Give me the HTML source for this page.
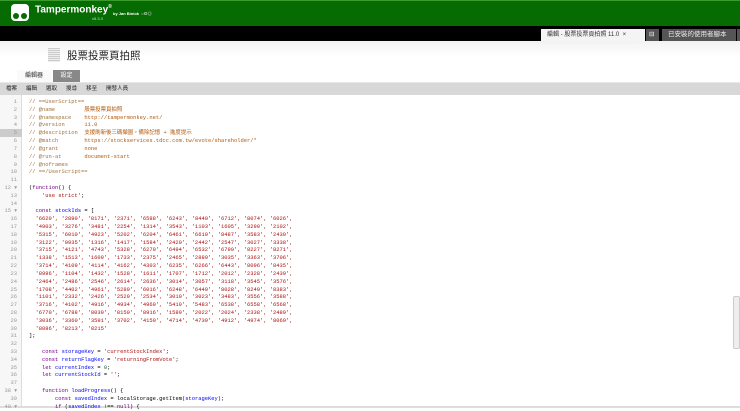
<!DOCTYPE html>
<html><head><meta charset="utf-8"><style>
*{margin:0;padding:0;box-sizing:border-box}
body{width:740px;height:408px;overflow:hidden;background:#fff;font-family:"Liberation Sans","Noto Sans CJK TC",sans-serif;position:relative}
.a{position:absolute}
#hdr{left:0;top:0;width:740px;height:26px;background:#066b02;border-top:1px solid #3a9a2a}
#blk{left:0;top:26px;width:740px;height:15px;background:#000}
#logo{left:11px;top:4px;width:18px;height:17px;background:#fff;border-radius:4px}
#logo i{position:absolute;bottom:2px;width:6px;height:6px;border-radius:50%;background:#066b02}
.tab{top:29px;height:12px;font-size:6.5px;line-height:12px;padding:0 6px}
#whitebar{left:0;top:41px;width:740px;height:41px;background:linear-gradient(#f2f2f2,#fff 40%)}
#menu{left:0;top:82px;width:740px;height:13px;background:#d8d8d8;border-top:1px solid #e8e8e8;font-size:5.5px;line-height:12px;color:#222}
#menu span{margin-left:7px;margin-right:2px}
#gut{left:0;top:95px;width:22px;height:313px;background:#f7f7f7;border-right:1px solid #ddd}
pre{font-family:"Liberation Mono","Noto Sans CJK TC",monospace;font-size:5.43px;line-height:7.82px;position:absolute;top:98px}
#nums{left:0;width:17px;text-align:right;color:#999}
#code{left:29px;color:#000}
.c{color:#a0733c}.v{color:#b05a10}.s{color:#a11}.k{color:#708}.d{color:#00f}.n{color:#164}
</style></head><body>
<div class="a" id="hdr"></div>
<div class="a" id="logo"><i style="left:2px"></i><i style="right:2px"></i></div>
<div class="a" style="left:35px;top:4px;color:#fff;font-size:10px;font-weight:bold">Tampermonkey<sup style="font-size:5px">®</sup></div>
<div class="a" style="left:113px;top:11px;color:#fff;font-size:4px;font-weight:bold">by Jan Biniok &nbsp;○⊙◎</div>
<div class="a" style="left:92px;top:16px;color:#cde;font-size:4px">v5.3.3</div>
<div class="a" id="blk"></div>
<div class="a tab" style="left:541px;width:104px;background:#f4f4f4;color:#333;font-size:6px">編輯 - 股票投票頁拍照 11.0 &nbsp;×</div>
<div class="a tab" style="left:646px;width:13px;background:#555;color:#fff;padding:0 3px">⊟</div>
<div class="a tab" style="left:662px;width:74px;background:#555;color:#eee">已安裝的使用者腳本</div>
<div class="a tab" style="left:737px;width:3px;background:#555"></div>
<div class="a" id="whitebar"></div>
<div class="a" style="left:48px;top:48px;width:12px;height:14px;background:repeating-linear-gradient(#ccc 0 1px,#eee 1px 2px)"></div>
<div class="a" style="left:67px;top:48px;font-size:10.5px;color:#222">股票投票頁拍照</div>
<div class="a" style="left:17px;top:70px;width:34px;height:12px;background:#fafafa;font-size:6px;line-height:12px;text-align:center;color:#333">編輯器</div>
<div class="a" style="left:53px;top:70px;width:27px;height:12px;background:#888;font-size:6px;line-height:12px;text-align:center;color:#fff">設定</div>
<div class="a" id="menu"><span style="margin-left:6px">檔案</span><span>編輯</span><span>選取</span><span>搜尋</span><span>移至</span><span>開發人員</span></div>
<div class="a" id="gut"></div>
<div class="a" style="left:0;top:129px;width:22px;height:8px;background:#ccc"></div>
<div class="a" style="left:733px;top:296px;width:7px;height:53px;background:#eee;border:1px solid #ccc;border-radius:2px"></div>
<div class="a" style="left:0;top:406px;width:740px;height:2px;background:#ddd"></div>
<pre id="nums">1
2
3
4
5
6
7
8
9
10
11
12 ▾
13
14
15 ▾
16
17
18
19
20
21
22
23
24
25
26
27
28
29
30
31
32
33
34
35
36
37
38 ▾
39
40 ▾</pre>
<pre id="code"><span class="c">// ==UserScript==
// @name         <span class="v">股票投票頁拍照</span>
// @namespace    <span class="v">http://tampermonkey.net/</span>
// @version      <span class="v">11.0</span>
// @description  <span class="v">支援刷新後三碼擷圖，備除記憶 + 進度提示</span>
// @match        <span class="v">https://stockservices.tdcc.com.tw/evote/shareholder/*</span>
// @grant        <span class="v">none</span>
// @run-at       <span class="v">document-start</span>
// @noframes
// ==/UserScript==</span>

(<span class="k">function</span>() {
    <span class="s">'use strict'</span>;

  <span class="k">const</span> <span class="d">stockIds</span> = [
  <span class="s">'6620', '2890', '8171', '2371', '6588', '6243', '8440', '6712', '8074', '6026',
  '4903', '3276', '3481', '2254', '1314', '3543', '1103', '1605', '3290', '2102',
  '5315', '6010', '4923', '5202', '6204', '6461', '6610', '8487', '3583', '2430',
  '3122', '9935', '1316', '1417', '1584', '2420', '2442', '2547', '3027', '3338',
  '3715', '4121', '4743', '5328', '6270', '6494', '6532', '6799', '8227', '8271',
  '1338', '1513', '1609', '1733', '2375', '2465', '2889', '3035', '3363', '3706',
  '3714', '4109', '4114', '4162', '4303', '6235', '6266', '6443', '8096', '8435',
  '8996', '1104', '1432', '1528', '1611', '1707', '1712', '2012', '2328', '2439',
  '2464', '2486', '2546', '2614', '2636', '3014', '3057', '3118', '3545', '3576',
  '1708', '4402', '4961', '5289', '6016', '6248', '6449', '8028', '8240', '8383',
  '1101', '2332', '2426', '2520', '2534', '3010', '3023', '3483', '3556', '3588',
  '3716', '4102', '4916', '4934', '4960', '5410', '5483', '6538', '6558', '6568',
  '6770', '6788', '8039', '8150', '8916', '1589', '2022', '2024', '2338', '2489',
  '3036', '3360', '3591', '3702', '4150', '4714', '4739', '4912', '4974', '8069',
  '8086', '8213', '8215'</span>
];

    <span class="k">const</span> <span class="d">storageKey</span> = <span class="s">'currentStockIndex'</span>;
    <span class="k">const</span> <span class="d">returnFlagKey</span> = <span class="s">'returningFromVote'</span>;
    <span class="k">let</span> <span class="d">currentIndex</span> = <span class="n">0</span>;
    <span class="k">let</span> <span class="d">currentStockId</span> = <span class="s">''</span>;

    <span class="k">function</span> <span class="d">loadProgress</span>() {
        <span class="k">const</span> <span class="d">savedIndex</span> = localStorage.getItem(<span class="d">storageKey</span>);
        <span class="k">if</span> (<span class="d">savedIndex</span> !== <span class="k">null</span>) {</pre>
</body></html>
